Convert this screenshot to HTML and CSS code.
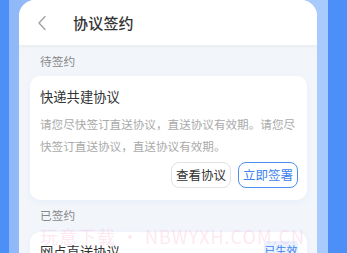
FILE: index.html
```html
<!DOCTYPE html>
<html lang="zh">
<head>
<meta charset="utf-8">
<link rel="stylesheet" href="styles.css">
</head>
<body>
<div class="page">
  <div class="phone">
    <div class="screen">
      <div class="header">
        <svg class="back" width="12" height="16" viewBox="0 0 12 16"><path d="M9 1.5 L3 8 L9 14.5" fill="none" stroke="#a3a3a3" stroke-width="1.4" stroke-linecap="round" stroke-linejoin="round"/></svg>
        <span class="title">协议签约</span>
      </div>
      <div class="content">
        <div class="label">待签约</div>
        <div class="card">
          <div class="card-title">快递共建协议</div>
          <div class="desc">请您尽快签订直送协议，直送协议有效期。请您尽快签订直送协议，直送协议有效期。</div>
          <div class="actions">
            <span class="btn">查看协议</span>
            <span class="btn primary">立即签署</span>
          </div>
        </div>
        <div class="label label2">已签约</div>
        <div class="card card2">
          <div class="row">
            <div class="card-title">网点直送协议</div>
            <span class="badge">已生效</span>
          </div>
        </div>
      </div>
      <div class="watermark">玩意下载 • NBWYXH.COM.CN</div>
    </div>
  </div>
</div>
</body>
</html>
```
FILE: styles.css
```css
* { box-sizing: border-box; }
html, body { margin: 0; padding: 0; }
body {
  width: 347px;
  height: 253px;
  overflow: hidden;
  font-family: "Noto Sans CJK SC", "Noto Sans", sans-serif;
  background: #4c8ff6;
}
.page {
  width: 347px;
  height: 253px;
  padding-left: 9px;
  display: flex;
}
.phone {
  width: 319px;
  height: 253px;
  background: linear-gradient(90deg, #8fb8fa 0%, #a8cafc 50%, #a8cafc 100%);
  padding: 0 11px 0 10px;
}
.screen {
  position: relative;
  width: 298px;
  height: 253px;
  background: #f2f6fb;
  border-radius: 16px 16px 0 0;
  overflow: hidden;
}
.header {
  height: 45px;
  background: #fff;
  display: flex;
  align-items: center;
  padding-left: 17px;
  box-shadow: 0 1px 4px rgba(0, 0, 0, 0.06);
  position: relative;
  z-index: 1;
}
.back { display: block; margin-top: 1px; }
.title {
  margin-left: 25px;
  font-size: 15px;
  font-weight: 500;
  color: #333;
  letter-spacing: 0.2px;
}
.content {
  padding: 0 10px 0 11px;
}
.label {
  height: 31px;
  line-height: 32px;
  padding-left: 10px;
  font-size: 11.7px;
  color: #888;
}
.label2 {
  height: 32px;
  line-height: 30px;
}
.card {
  background: #fff;
  border-radius: 10px;
  padding: 11px 9px 12px 10px;
  box-shadow: 0 2px 6px rgba(120, 150, 200, 0.08);
}
.card-title {
  font-size: 13.3px;
  line-height: 20px;
  color: #333;
}
.desc {
  margin-top: 6px;
  font-size: 11.6px;
  line-height: 22px;
  color: #aaa;
}
.actions {
  margin-top: 5px;
  display: flex;
  justify-content: flex-end;
  gap: 7px;
}
.btn {
  width: 60px;
  height: 26px;
  border: 1px solid #e2e2e2;
  border-radius: 8px;
  font-size: 12.5px;
  line-height: 24px;
  text-align: center;
  color: #333;
}
.btn.primary {
  border-color: #4d8ff3;
  color: #3d82ee;
}
.card2 {
  padding-top: 10px;
}
.row {
  display: flex;
  justify-content: space-between;
  align-items: flex-start;
}
.badge {
  margin-top: -1px;
  width: 34px;
  height: 16px;
  background: #eaf2ff;
  color: #3d82ee;
  font-size: 11px;
  line-height: 18px;
  text-align: center;
  border-radius: 3px;
}
.watermark {
  position: absolute;
  left: 21px;
  top: 225px;
  font-size: 18px;
  line-height: 22px;
  color: rgba(250, 160, 200, 0.25);
  letter-spacing: 1px;
  white-space: nowrap;
  pointer-events: none;
}
```
